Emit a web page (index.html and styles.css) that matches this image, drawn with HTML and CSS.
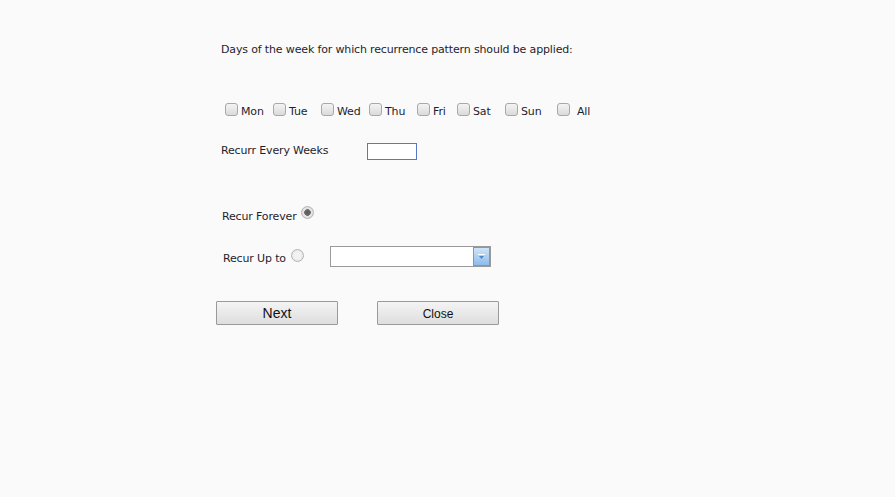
FILE: index.html
```html
<!DOCTYPE html>
<html lang="en">
<head>
  <meta charset="UTF-8" />
  <title>Recurrence</title>
  <link rel="stylesheet" href="styles.css">
</head>
<body>
  <div class="panel">
    <p class="intro">Days of the week for which recurrence pattern should be applied:</p>

    <div class="days">
      <label class="day"><input type="checkbox" /> <span>Mon</span></label>
      <label class="day"><input type="checkbox" /> <span>Tue</span></label>
      <label class="day"><input type="checkbox" /> <span>Wed</span></label>
      <label class="day"><input type="checkbox" /> <span>Thu</span></label>
      <label class="day short"><input type="checkbox" /> <span>Fri</span></label>
      <label class="day"><input type="checkbox" /> <span>Sat</span></label>
      <label class="day wide"><input type="checkbox" /> <span>Sun</span></label>
      <label class="day all"><input type="checkbox" /> <span>All</span></label>
    </div>

    <div class="weeks">
      <span class="weeks-label">Recurr Every Weeks</span>
      <input type="text" class="weeks-input" />
    </div>

    <div class="forever">
      <span>Recur Forever</span>
      <input type="radio" name="recur" checked />
    </div>

    <div class="upto">
      <span>Recur Up to</span>
      <input type="radio" name="recur" />
      <div class="datebox">
        <div class="datebox-field"></div>
        <div class="datebox-btn">
          <svg width="7" height="6" viewBox="0 0 7 6">
            <rect x="0" y="0" width="7" height="1" fill="#ffffff"/>
            <path d="M1 2 L6 2 L3.5 5 Z" fill="#4f86c8"/>
          </svg>
        </div>
      </div>
    </div>

    <div class="actions">
      <button class="btn next">Next</button>
      <button class="btn close">Close</button>
    </div>
  </div>
</body>
</html>
```

FILE: styles.css
```css
* {
  box-sizing: border-box;
}

body {
  margin: 0;
  background-color: #fafafa;
  font-family: 'DejaVu Sans', Verdana, sans-serif;
  font-size: 11px;
  letter-spacing: -0.15px;
  color: #1e1e2e;
}

.panel {
  padding: 42px 0 0 216px;
}

.intro {
  margin: 0 0 0 5px;
  line-height: 16px;
}

.days {
  display: flex;
  align-items: center;
  margin: 43px 0 0 9px;
}

.day {
  display: flex;
  align-items: center;
  gap: 3px;
  width: 48px;
}

.day.short {
  width: 40px;
}

.day.wide {
  width: 52px;
}

.day span {
  padding-top: 4px;
}

.day.all {
  gap: 7px;
}

input[type="checkbox"] {
  appearance: none;
  margin: 0;
  width: 13px;
  height: 13px;
  border: 1px solid #a8a8a8;
  border-radius: 3px;
  background: linear-gradient(#f4f4f4, #dadada);
}

input[type="radio"] {
  appearance: none;
  margin: 0;
  width: 13px;
  height: 13px;
  border: 1px solid #b4b4b4;
  border-radius: 50%;
  background: radial-gradient(circle, #f2f2f2 40%, #dcdcdc);
}

input[type="radio"]:checked {
  background: radial-gradient(circle, #5a5a5a 0, #6a6a6a 3px, #e6e6e6 3.6px, #d4d4d4);
}

.weeks {
  display: flex;
  align-items: center;
  margin: 23px 0 0 5px;
}

.weeks-label {
  width: 146px;
}

.weeks-input {
  width: 50px;
  height: 17px;
  margin: 2px 0 0 0;
  border: 1px solid #5b77c6;
  background: #fff;
  outline: none;
}

.forever {
  display: flex;
  align-items: center;
  gap: 4px;
  margin: 45px 0 0 6px;
}

.forever span {
  padding-top: 5px;
}

.forever input {
  margin-top: -3px;
}

.upto {
  display: flex;
  align-items: center;
  margin: 23px 0 0 7px;
}

.upto span {
  padding-top: 3px;
  width: 68px;
}

.upto input {
  margin-top: -2px;
}

.datebox {
  display: flex;
  width: 161px;
  height: 21px;
  margin: 0 0 0 26px;
  border: 1px solid #9a9a9a;
  background: #fff;
}

.datebox-field {
  flex-grow: 1;
}

.datebox-btn {
  width: 17px;
  border: 1px solid #6d9cd6;
  background: linear-gradient(#cfe4fa, #8ebceb);
  display: flex;
  justify-content: center;
  align-items: center;
}

.actions {
  display: flex;
  gap: 39px;
  margin-top: 34px;
}

.btn {
  width: 122px;
  height: 24px;
  border: 1px solid #9a9a9a;
  border-radius: 1px;
  background: linear-gradient(#f4f4f4, #dedede);
  font-family: 'Liberation Sans', Arial, sans-serif;
  letter-spacing: 0;
  color: #111;
  cursor: pointer;
  padding: 0;
}

.btn.next {
  font-size: 14px;
}

.btn.close {
  font-size: 12px;
  padding-top: 2px;
}
```
